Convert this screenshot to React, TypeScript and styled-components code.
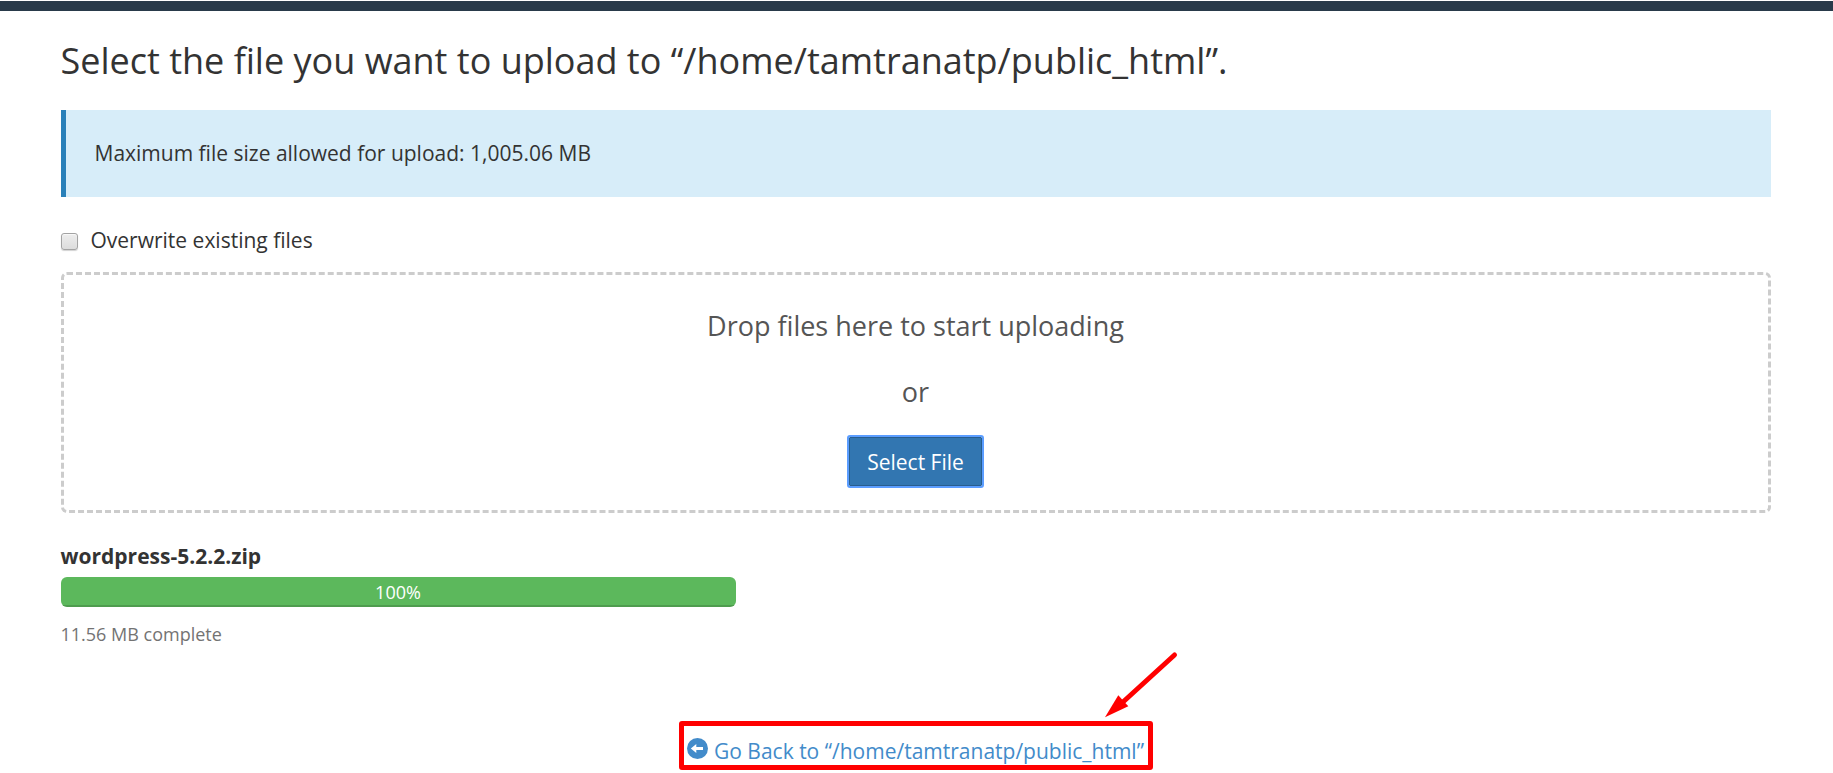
import React from "react";
import styled, { createGlobalStyle } from "styled-components";

const GlobalStyle = createGlobalStyle`
  *, *::before, *::after { box-sizing: border-box; }
  body {
    margin: 0;
    background: #fff;
    color: #333;
    font: 400 21px/30px "Open Sans", "Noto Sans", sans-serif;
    overflow: hidden;
  }
`;

const TopBar = styled.div`
  height: 10px;
  margin-top: 1px;
  background: #293a4a;
`;

const Page = styled.main`
  display: flex;
  flex-direction: column;
  padding: 25px 62.5px 0 60.5px;
`;

const Title = styled.h1`
  margin: 0 0 24px;
  font-size: 36px;
  font-weight: 400;
  line-height: 50px;
`;

const Notice = styled.div`
  height: 87px;
  padding: 28px 28px 28px 29px;
  border-left: 5px solid #2980b9;
  background: #d7edf9;
`;

const OptionRow = styled.label`
  display: flex;
  align-items: center;
  gap: 13px;
  height: 30px;
  margin: 28px 0 17px;
`;

const Checkbox = styled.input`
  appearance: none;
  width: 17px;
  height: 17px;
  margin: 2px 0 0;
  border: 1px solid #a3a3a3;
  border-radius: 3px;
  background: linear-gradient(#ededed, #dcdcdc);
  box-shadow: 0 1px 1px rgba(0, 0, 0, 0.18), inset 0 1px 1px rgba(255, 255, 255, 0.7);
`;

const DropZone = styled.section`
  display: flex;
  flex-direction: column;
  align-items: center;
  height: 241px;
  padding-top: 32px;
  border: 3px dashed #ccc;
  border-radius: 6px;
`;

const DropText = styled.p`
  margin: 0 0 28px;
  color: #555;
  font-size: 27px;
  line-height: 38px;
`;

const SelectButton = styled.button`
  width: 133px;
  height: 49px;
  margin-top: -2px;
  padding: 0;
  border: 1px solid #285e8e;
  border-radius: 1px;
  outline: 2px solid #5b9dff;
  background: #3276b1;
  color: #fff;
  font: inherit;
`;

const Upload = styled.section`
  width: 675px;
  margin-top: 28px;
`;

const FileName = styled.div`
  font-weight: 700;
`;

const ProgressTrack = styled.div`
  height: 30px;
  margin: 6px 0 14px;
  overflow: hidden;
  border-radius: 6px;
  background: #f5f5f5;
`;

const ProgressFill = styled.div`
  height: 100%;
  background: #5cb85c;
  box-shadow: inset 0 -2px 0 rgba(0, 0, 0, 0.15);
  color: #fff;
  font-size: 18px;
  line-height: 30px;
  text-align: center;
`;

const Status = styled.div`
  color: #737373;
  font-size: 18px;
  line-height: 26px;
`;

const Footer = styled.footer`
  position: relative;
  align-self: center;
  margin-top: 74px;
`;

const BackLink = styled.a`
  display: flex;
  width: 474px;
  height: 49px;
  padding: 10px 0 0 3.5px;
  border: 5px solid #f00;
  border-radius: 3px;
  color: #428bca;
  text-decoration: none;
  white-space: nowrap;
`;

const BackIcon = styled.svg`
  flex: none;
  width: 21px;
  height: 21px;
  margin: 2px 6px 0 0;
`;

const Pointer = styled.svg`
  position: absolute;
  left: 420.5px;
  top: -72px;
`;

export default function App() {
  const percent = 100;
  return (
    <>
      <GlobalStyle />
      <TopBar />
      <Page>
        <Title>Select the file you want to upload to “/home/tamtranatp/public_html”.</Title>
        <Notice>Maximum file size allowed for upload: 1,005.06 MB</Notice>
        <OptionRow>
          <Checkbox type="checkbox" />
          <span>Overwrite existing files</span>
        </OptionRow>
        <DropZone>
          <DropText>Drop files here to start uploading</DropText>
          <DropText>or</DropText>
          <SelectButton type="button">Select File</SelectButton>
        </DropZone>
        <Upload>
          <FileName>wordpress-5.2.2.zip</FileName>
          <ProgressTrack>
            <ProgressFill style={{ width: `${percent}%` }}>{percent}%</ProgressFill>
          </ProgressTrack>
          <Status>11.56 MB complete</Status>
        </Upload>
        <Footer>
          <BackLink href="#">
            <BackIcon viewBox="0 0 21 21" aria-hidden="true">
              <circle cx="10.5" cy="10.5" r="10.5" fill="#428bca" />
              <path d="M3.8 10.5 9.3 6V8.9H16V12.1H9.3V15Z" fill="#fff" />
            </BackIcon>
            <span>Go Back to “/home/tamtranatp/public_html”</span>
          </BackLink>
          <Pointer width="82" height="72" viewBox="0 0 82 72" aria-hidden="true">
            <path d="M75.500 6 24 53" stroke="#f00" strokeWidth="5" strokeLinecap="round" />
            <path d="M6 68.300 19.300 46.300 29.300 57.300Z" fill="#f00" />
          </Pointer>
        </Footer>
      </Page>
    </>
  );
}
